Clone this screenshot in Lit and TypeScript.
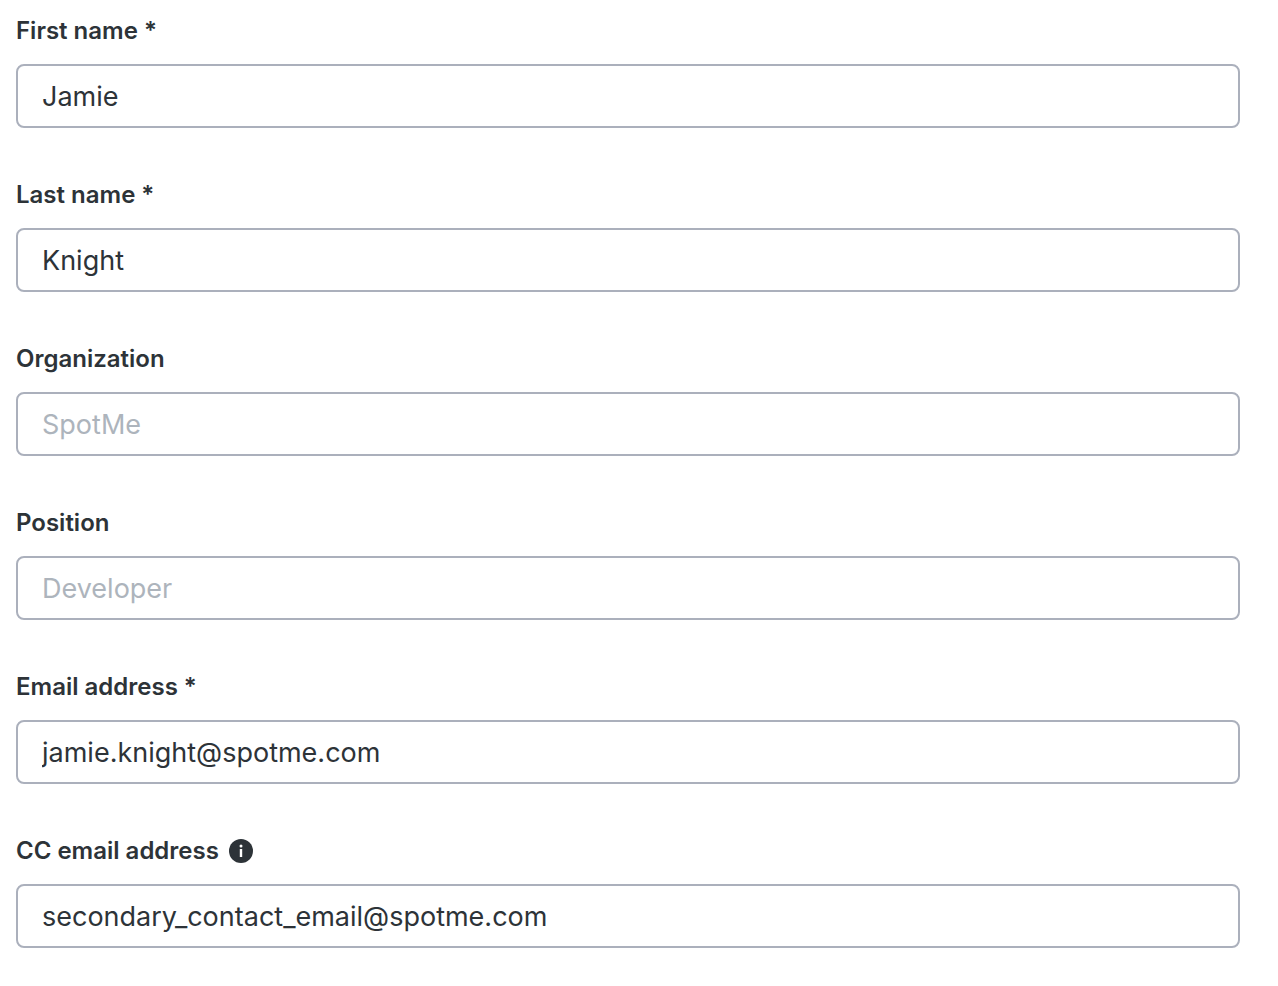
import { LitElement, html, css, nothing } from "lit";
import { customElement } from "lit/decorators.js";

interface Field {
  id: string;
  label: string;
  type: string;
  value?: string;
  placeholder?: string;
  info?: boolean;
}

const FIELDS: Field[] = [
  { id: "first-name", label: "First name *", type: "text", value: "Jamie" },
  { id: "last-name", label: "Last name *", type: "text", value: "Knight" },
  { id: "organization", label: "Organization", type: "text", placeholder: "SpotMe" },
  { id: "position", label: "Position", type: "text", placeholder: "Developer" },
  { id: "email", label: "Email address *", type: "email", value: "jamie.knight@spotme.com" },
  { id: "cc-email", label: "CC email address", type: "email", value: "secondary_contact_email@spotme.com", info: true },
];

@customElement("app-root")
export class AppRoot extends LitElement {
  static styles = css`
    :host {
      display: block;
      min-height: 100vh;
      box-sizing: border-box;
      background: #fff;
      color: #2d3338;
      font-family: Inter, "Liberation Sans", sans-serif;
    }
    .form {
      display: flex;
      flex-direction: column;
      gap: 52px;
      padding: 16px 38px 38px 16px;
    }
    .field {
      display: flex;
      flex-direction: column;
      gap: 18px;
    }
    .heading {
      display: flex;
      align-items: center;
      gap: 10px;
    }
    .label {
      font-size: 24px;
      line-height: 30px;
      font-weight: 600;
    }
    .info {
      display: block;
      width: 24px;
      height: 24px;
    }
    .input {
      box-sizing: border-box;
      width: 100%;
      height: 64px;
      margin: 0;
      padding: 0 24px;
      border: 2px solid #abb0bc;
      border-radius: 8px;
      background: #fff;
      color: inherit;
      font: 400 27px/40px Inter, "Liberation Sans", sans-serif;
      outline: none;
    }
    .input:focus {
      border-color: #5b6b8c;
    }
    .input::placeholder {
      color: #adb4bc;
      opacity: 1;
    }
  `;

  private renderField(f: Field) {
    return html`
      <div class="field">
        <div class="heading">
          <label class="label" for=${f.id}>${f.label}</label>
          ${f.info
            ? html`<svg class="info" viewBox="0 0 24 24" aria-hidden="true">
                <circle cx="12" cy="12" r="12" fill="#2d3338" />
                <circle cx="12" cy="7" r="1.5" fill="#fff" />
                <rect x="10.8" y="10" width="2.4" height="8" fill="#fff" />
              </svg>`
            : nothing}
        </div>
        <input class="input" id=${f.id} type=${f.type} .value=${f.value ?? ""} placeholder=${f.placeholder ?? nothing} />
      </div>
    `;
  }

  render() {
    return html`<form class="form">${FIELDS.map((f) => this.renderField(f))}</form>`;
  }
}
